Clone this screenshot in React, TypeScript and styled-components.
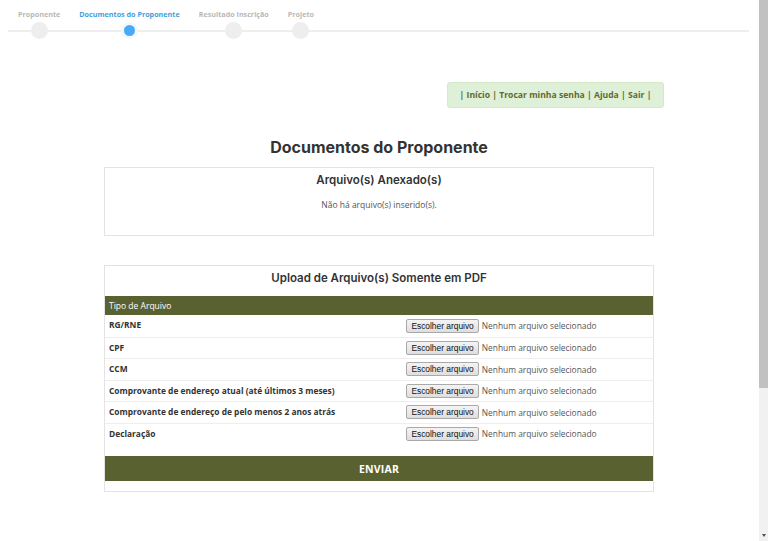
import React from "react";
import styled, { createGlobalStyle } from "styled-components";

const GlobalStyle = createGlobalStyle`
  html {
    scrollbar-width: none;
  }
  body {
    margin: 8px 18px 8px 8px;
    background: #fff;
    font-family: "Open Sans", "Liberation Sans", sans-serif;
    color: #333;
  }
`;

const OLIVE = "#5a6130";

const Page = styled.div`
  min-height: 738px;
`;

// stand-in for the browser's narrow scrollbar seen in the capture
const ScrollTrack = styled.div`
  position: fixed;
  top: 0;
  right: 0;
  width: 9px;
  height: 100vh;
  background: #f1f1f1;
  display: flex;
  flex-direction: column;
  justify-content: space-between;
`;

const ScrollThumb = styled.div`
  height: 388px;
  background: #c1c1c1;
`;

const ScrollArrow = styled.div`
  align-self: center;
  margin-bottom: 4px;
  width: 0;
  height: 0;
  border-left: 2.5px solid transparent;
  border-right: 2.5px solid transparent;
  border-top: 3px solid #505050;
`;

const StepBar = styled.div`
  position: relative;
  display: flex;
  gap: 19px;
  padding: 1px 0 0 10px;

  &::before {
    content: "";
    position: absolute;
    left: 0;
    right: 1px;
    top: 22px;
    height: 2px;
    background: #eeeeee;
  }
`;

const Step = styled.div`
  position: relative;
  display: flex;
  flex-direction: column;
  align-items: center;
`;

const StepLabel = styled.span<{ $active?: boolean }>`
  font-size: 7.2px;
  line-height: 10px;
  font-weight: 700;
  white-space: nowrap;
  color: ${({ $active }) => ($active ? "#44a0dc" : "#b8b8b8")};
`;

const StepDot = styled.span<{ $active?: boolean }>`
  margin-top: 3px;
  width: 17px;
  height: 17px;
  border-radius: 50%;
  background: ${({ $active }) => ($active ? "#f4f6f8" : "#eeeeee")};
  display: flex;
  align-items: center;
  justify-content: center;

  &::after {
    content: "";
    display: ${({ $active }) => ($active ? "block" : "none")};
    width: 11px;
    height: 11px;
    border-radius: 50%;
    background: #4aa9f5;
  }
`;

const Container = styled.div`
  width: 570px;
  margin: 0 auto;
  display: flex;
  flex-direction: column;
`;

const MenuBox = styled.div`
  align-self: flex-end;
  margin-top: 43px;
  width: 217px;
  height: 26px;
  box-sizing: border-box;
  background: #dff0d8;
  border: 1px solid #d6e9c6;
  border-radius: 3px;
  display: flex;
  align-items: center;
  justify-content: center;
  font-size: 8.6px;
  font-weight: 700;
  color: #5f6b2c;
  white-space: pre;
`;

const Title = styled.h1`
  margin: 29px 0 10px;
  font-family: Inter, "Open Sans", sans-serif;
  font-size: 16px;
  line-height: 20px;
  font-weight: 700;
  text-align: center;
  color: #333;
`;

const Panel = styled.section<{ $gap?: number }>`
  margin: ${({ $gap }) => $gap ?? 0}px 10px 0;
  border: 1px solid #e3e3e3;
  display: flex;
  flex-direction: column;
`;

const PanelTitle = styled.h2`
  margin: 4px 0 0;
  font-family: Inter, "Open Sans", sans-serif;
  font-size: 11.5px;
  line-height: 16px;
  font-weight: 600;
  text-align: center;
  color: #333;
`;

const EmptyText = styled.p`
  margin: 11px 0 24px;
  font-size: 8.5px;
  line-height: 12px;
  text-align: center;
  color: #555;
`;

const Table = styled.div`
  margin-top: 10px;
  display: flex;
  flex-direction: column;
`;

const HeaderRow = styled.div`
  height: 19px;
  background: ${OLIVE};
  color: #fff;
  font-size: 8.5px;
  display: flex;
  align-items: center;
  padding-left: 4px;
`;

const Row = styled.div`
  display: grid;
  grid-template-columns: 55% 45%;
  min-height: 21.5px;
  box-sizing: border-box;
  border-top: 1px solid #eeeeee;
  &:first-of-type {
    border-top: none;
  }
`;

const RowLabel = styled.div`
  padding: 4px 4px 2px;
  font-size: 8.4px;
  line-height: 12px;
  font-weight: 700;
  color: #333;
`;

const FileCell = styled.div`
  display: flex;
  align-items: center;
  gap: 3px;
  padding: 3px 0;
`;

const FileButton = styled.button`
  height: 14px;
  padding: 0 4px;
  font-family: "Liberation Sans", Arial, sans-serif;
  font-size: 8.4px;
  color: #111;
  background: linear-gradient(#f4f4f4, #dedede);
  border: 1px solid #a9a9a9;
  border-radius: 2px;
  line-height: 12px;
`;

const FileName = styled.span`
  font-size: 8.4px;
  color: #555;
  white-space: nowrap;
`;

const SubmitButton = styled.button`
  margin: 12px 0 10px;
  height: 25px;
  border: none;
  background: ${OLIVE};
  color: #fff;
  font-family: "Open Sans", sans-serif;
  font-size: 10.5px;
  font-weight: 700;
  letter-spacing: 0.2px;
`;

const steps = [
  { label: "Proponente" },
  { label: "Documentos do Proponente", active: true },
  { label: "Resultado Inscrição" },
  { label: "Projeto" },
];

const fileTypes = [
  "RG/RNE",
  "CPF",
  "CCM",
  "Comprovante de endereço atual (até últimos 3 meses)",
  "Comprovante de endereço de pelo menos 2 anos atrás",
  "Declaração",
];

const App = () => {
  return (
    <Page>
      <GlobalStyle />
      <StepBar>
        {steps.map((s) => (
          <Step key={s.label}>
            <StepLabel $active={s.active}>{s.label}</StepLabel>
            <StepDot $active={s.active} />
          </Step>
        ))}
      </StepBar>
      <Container>
        <MenuBox>| Início | Trocar minha senha | Ajuda | Sair |</MenuBox>
        <Title>Documentos do Proponente</Title>
        <Panel>
          <PanelTitle>Arquivo(s) Anexado(s)</PanelTitle>
          <EmptyText>Não há arquivo(s) inserido(s).</EmptyText>
        </Panel>
        <Panel $gap={29}>
          <PanelTitle>Upload de Arquivo(s) Somente em PDF</PanelTitle>
          <Table>
            <HeaderRow>Tipo de Arquivo</HeaderRow>
            <div>
              {fileTypes.map((t) => (
                <Row key={t}>
                  <RowLabel>{t}</RowLabel>
                  <FileCell>
                    <FileButton type="button">Escolher arquivo</FileButton>
                    <FileName>Nenhum arquivo selecionado</FileName>
                  </FileCell>
                </Row>
              ))}
            </div>
          </Table>
          <SubmitButton type="button">ENVIAR</SubmitButton>
        </Panel>
      </Container>
      <ScrollTrack>
        <ScrollThumb />
        <ScrollArrow />
      </ScrollTrack>
    </Page>
  );
};

export default App;
